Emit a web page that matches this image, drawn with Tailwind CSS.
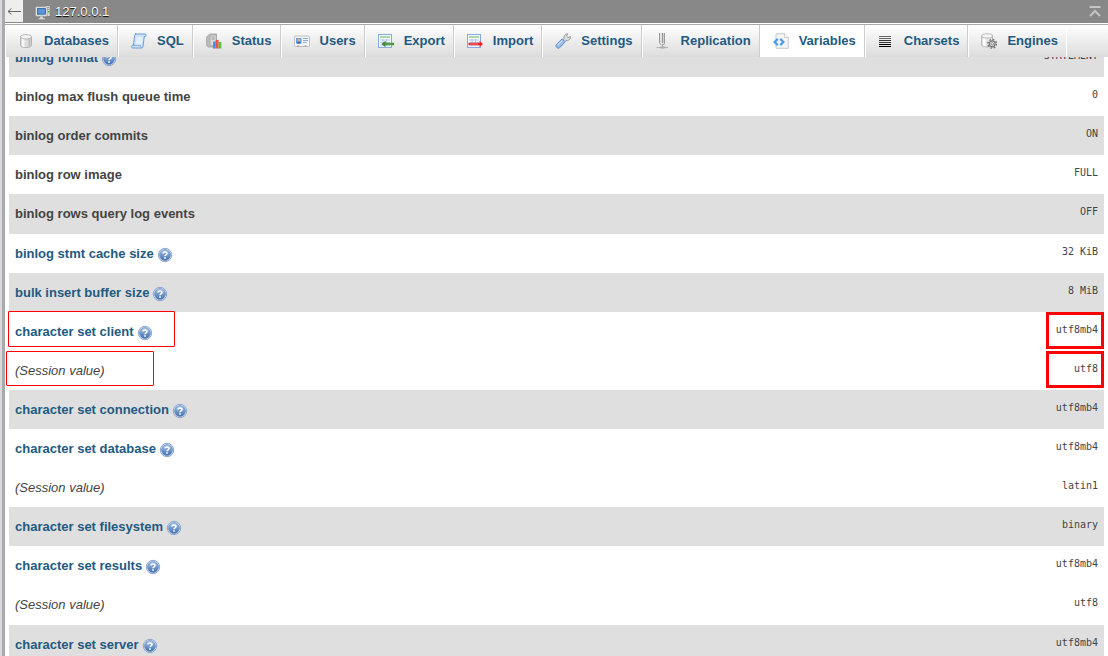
<!DOCTYPE html>
<html lang="en">
<head>
    <meta charset="UTF-8">
    <meta name="viewport" content="width=device-width, initial-scale=1.0">
    <title>127.0.0.1 | Server variables</title>
    <script src="https://cdn.jsdelivr.net/npm/@tailwindcss/browser@4"></script>
</head>
<body class="h-screen overflow-hidden bg-white font-['Liberation_Sans',Arial,sans-serif] text-[13px] leading-4 text-[#444]">
    <!-- Shared help icon -->
    <svg class="absolute h-0 w-0">
        <defs>
            <linearGradient id="helpFill" x1="0" y1="0" x2="0" y2="1">
                <stop offset="0" stop-color="#a9c4e6"/>
                <stop offset="1" stop-color="#3f70b0"/>
            </linearGradient>
        </defs>
        <symbol id="help" viewBox="0 0 16 16">
            <circle cx="8" cy="8" r="6.7" fill="#f0f5fc" stroke="#7f9ccb" stroke-width=".9"/>
            <circle cx="8" cy="8" r="5.5" fill="url(#helpFill)" stroke="#5b82b8" stroke-width=".6"/>
            <path d="M6 6.6C6 4.4 10 4.4 10 6.6C10 7.9 8 7.8 8 9.3" fill="none" stroke="#fff" stroke-width="1.5"/>
            <rect x="7.2" y="10.2" width="1.6" height="1.6" fill="#fff"/>
        </symbol>
    </svg>

    <div class="flex h-full">
        <!-- Navigation resizer -->
        <div class="w-[5px] shrink-0 border-r-3 border-[#aaa] bg-[#dadade]"></div>

        <div class="relative min-w-0 flex-1">
            <!-- Top bar -->
            <header class="absolute inset-x-0 top-0 z-10 bg-white">
                <div class="flex h-[23px] items-center bg-[#888] pr-[5px]">
                    <button type="button" aria-label="Hide panel" class="flex h-[22px] w-[18px] items-center justify-center self-start bg-[#eee]">
                        <svg class="h-4 w-4" viewBox="0 0 16 16" fill="none" stroke="#666" stroke-width="1"><path d="M15 8.5H2M5.5 5.5L2 8.5L5.5 11.5"/></svg>
                    </button>
                    <a href="#server" class="ml-3 flex items-center gap-1 text-white text-shadow-[0_1px_1px_#000]">
                        <svg class="h-4 w-4" viewBox="0 0 16 16">
                            <path d="M10 1.5H15.2V12.5H10Z" fill="#d5d5d5" stroke="#777" stroke-width=".8"/>
                            <path d="M11.5 3.5H14M11.5 5.5H14" stroke="#888" stroke-width=".8"/>
                            <rect x="13" y="7" width="1.5" height="1.5" fill="#4caf30"/>
                            <rect x=".6" y="2.8" width="11.6" height="9.4" rx=".8" fill="#eee" stroke="#999" stroke-width=".8"/>
                            <rect x="2.5" y="4.6" width="8" height="5.6" fill="#5e90d6" stroke="#285a9e" stroke-width=".8"/>
                            <path d="M5 12.2V14H3.5V15.4H10V14H8V12.2Z" fill="#ddd" stroke="#888" stroke-width=".4"/>
                        </svg>
                        127.0.0.1
                    </a>
                    <a href="#top" aria-label="Back to top" class="ml-auto">
                        <svg class="h-4 w-4" viewBox="0 0 16 16" fill="none" stroke="#c4c4c4" stroke-width="2"><path d="M2.5 3H13.5M3 12L8 7L13 12"/></svg>
                    </a>
                </div>

                <!-- Tabs -->
                <nav class="mt-px flex h-[33px] border-t border-[#aaa] bg-linear-to-b from-white to-[#dcdcdc] font-bold text-[#235a81]">
                    <a href="#databases" class="flex items-center gap-[10px] border-r border-l border-l-white border-r-[#ccc] pr-2 pl-3">
                        <svg class="h-4 w-4" viewBox="0 0 16 16">
                            <path d="M2.5 4V12.5C2.5 15.2 13.5 15.2 13.5 12.5V4Z" fill="#ddd" stroke="#aaa" stroke-width=".8"/>
                            <path d="M4 5V13.3L6.5 14V5Z" fill="#f8f8f8"/>
                            <path d="M10.5 5V14L12.5 13.3V5Z" fill="#bbb"/>
                            <ellipse cx="8" cy="3.8" rx="5.5" ry="2.2" fill="#f2f2f2" stroke="#aaa" stroke-width=".8"/>
                        </svg>
                        Databases
                    </a>
                    <a href="#sql" class="flex items-center gap-[10px] border-r border-l border-l-white border-r-[#ccc] pr-2 pl-3">
                        <svg class="h-4 w-4" viewBox="0 0 16 16">
                            <path d="M4 1H14.5C15.6 1 15.5 3.5 14 3.5H13.3L12 13.5C11.8 14.7 11.2 15 10.5 15H1.5C.2 15 .3 12.3 1.6 12.3H2.4L3.6 2.6C3.7 1.6 4 1 5 1Z" fill="#cfe2fa" stroke="#6b9bdb" stroke-width="1"/>
                            <path d="M5.5 4L4.5 12H10.5L11.7 4Z" fill="#e3effd"/>
                            <path d="M2 12.3H9.5C9.3 13.6 9.8 14.5 10.6 14.8" fill="none" stroke="#6b9bdb" stroke-width=".8"/>
                        </svg>
                        SQL
                    </a>
                    <a href="#status" class="flex items-center gap-[10px] border-r border-l border-l-white border-r-[#ccc] pr-2 pl-3">
                        <svg class="h-4 w-4" viewBox="0 0 16 16">
                            <path d="M.6 4L3.6 1H10.5V11L8 14H2.5L.6 12.5Z" fill="#bbb" stroke="#999" stroke-width=".7"/>
                            <path d="M4.2 2H10V12.5H4.2Z" fill="#ddd" stroke="#999" stroke-width=".5"/>
                            <path d="M5.5 4H8.8M5.5 6H8.8" stroke="#888" stroke-width=".8"/>
                            <rect x="7" y="8.5" width="2.8" height="7" fill="#4b8df0"/>
                            <rect x="9.8" y="7" width="2.8" height="8.5" fill="#ef5242"/>
                            <rect x="12.6" y="9" width="2.8" height="6.5" fill="#58bd45"/>
                        </svg>
                        Status
                    </a>
                    <a href="#users" class="flex items-center gap-[10px] border-r border-l border-l-white border-r-[#ccc] pr-2 pl-3">
                        <svg class="h-4 w-4" viewBox="0 0 16 16">
                            <rect x=".5" y="3" width="15" height="10.5" rx="1" fill="#f5f5f5" stroke="#bbb" stroke-width=".9"/>
                            <rect x="2" y="5" width="5.5" height="5.5" fill="#5e9be4"/>
                            <circle cx="4.8" cy="7" r="1.5" fill="#e6b184"/>
                            <path d="M3 10.5C3 8 6.6 8 6.6 10.5Z" fill="#2d62a5"/>
                            <path d="M9 5.5H14M9 7.5H14M9 9.5H12.5" stroke="#7da1d1" stroke-width=".9"/>
                            <path d="M3.5 13H5.5M10.5 13H12.5" stroke="#999" stroke-width="1"/>
                        </svg>
                        Users
                    </a>
                    <a href="#export" class="flex items-center gap-[10px] border-r border-l border-l-white border-r-[#ccc] pr-2 pl-3">
                        <svg class="h-4 w-4" viewBox="0 0 16 16">
                            <rect x=".5" y="1.5" width="13" height="13" fill="#f5f9ff" stroke="#86a9df" stroke-width="1"/>
                            <path d="M2 4H12" stroke="#92cd85" stroke-width="1.5"/>
                            <path d="M2 7H12M2 9.5H12M2 12H12M5 6V13M8.5 6V13" stroke="#a6bde3" stroke-width=".8"/>
                            <path d="M3.5 11L7.5 7.8V9.8H16V12.2H7.5V14.2Z" fill="#3c8633"/>
                            <path d="M7 11H15" stroke="#8cc37c" stroke-width=".7"/>
                        </svg>
                        Export
                    </a>
                    <a href="#import" class="flex items-center gap-[10px] border-r border-l border-l-white border-r-[#ccc] pr-2 pl-3">
                        <svg class="h-4 w-4" viewBox="0 0 16 16">
                            <rect x=".5" y="1.5" width="13" height="13" fill="#f5f9ff" stroke="#86a9df" stroke-width="1"/>
                            <path d="M2 4H12" stroke="#92cd85" stroke-width="1.5"/>
                            <path d="M2 7H12M2 9.5H12M2 12H12M5 6V13M8.5 6V13" stroke="#a6bde3" stroke-width=".8"/>
                            <path d="M16 11L12.5 7.8V9.8H1.5V12.2H12.5V14.2Z" fill="#f02525"/>
                            <path d="M3 11H11" stroke="#ff9a9a" stroke-width=".7"/>
                        </svg>
                        Import
                    </a>
                    <a href="#settings" class="flex items-center gap-[10px] border-r border-l border-l-white border-r-[#ccc] pr-2 pl-3">
                        <svg class="h-4 w-4" viewBox="0 0 16 16">
                            <path d="M8 8L9 5.5C8.3 2.5 10.5 .5 13 1L11.5 3L13 4.7L15.4 3.4C16 6 13.5 8.2 11 7.4L9.5 9Z" fill="#ddd" stroke="#8a8a8a" stroke-width=".8"/>
                            <path d="M7.2 5.8L10.2 8.8L4.7 14.7C2.8 16.4 -.2 13.5 1.3 11.6Z" fill="#9dbff0" stroke="#5880c8" stroke-width=".9"/>
                            <path d="M7 7.8L3 12" stroke="#c3d9f8" stroke-width="1.3"/>
                        </svg>
                        Settings
                    </a>
                    <a href="#replication" class="flex items-center gap-[10px] border-r border-l border-l-white border-r-[#ccc] pr-2 pl-3">
                        <svg class="h-4 w-4" viewBox="0 0 16 16">
                            <path d="M4.5 0V9.5L6 12M7.5 0V10M9.5 0V10L8.5 12" fill="none" stroke="#999" stroke-width="1"/>
                            <path d="M6 0V10M8.5 0V10" stroke="#d0d0d0" stroke-width="1"/>
                            <path d="M7.5 11V14" stroke="#aaa" stroke-width="1"/>
                            <path d="M1.5 14.5H13" stroke="#b5b5b5" stroke-width="1.2"/>
                            <rect x="5.5" y="13.5" width="4" height="2" fill="#aaa"/>
                        </svg>
                        Replication
                    </a>
                    <a href="#variables" aria-current="page" class="flex items-center gap-[10px] border-r border-l border-l-white border-r-[#ccc] bg-white pr-2 pl-3">
                        <svg class="h-4 w-4" viewBox="0 0 16 16">
                            <path d="M3 .8H11.5L15.3 4.5V15.3H3Z" fill="#f5f5f5" stroke="#c3c3c3" stroke-width=".9"/>
                            <path d="M11.5 .8V4.5H15.3" fill="#fff" stroke="#c3c3c3" stroke-width=".8"/>
                            <path d="M4.8 5.9L1.6 9L4.8 12.1M7.2 5.9L10.4 9L7.2 12.1" fill="none" stroke="#4e9bec" stroke-width="2.2"/>
                        </svg>
                        Variables
                    </a>
                    <a href="#charsets" class="flex items-center gap-[10px] border-r border-l border-l-white border-r-[#ccc] pr-2 pl-3">
                        <svg class="h-4 w-4" viewBox="0 0 16 16" shape-rendering="crispEdges">
                            <path d="M1 3.5H13M1 5.5H13" stroke="#666" stroke-width="1"/>
                            <path d="M1 7.5H13M1 9.5H13" stroke="#333" stroke-width="1"/>
                            <path d="M1 11.5H13M1 13.5H13" stroke="#000" stroke-width="1"/>
                        </svg>
                        Charsets
                    </a>
                    <a href="#engines" class="flex items-center gap-[10px] border-r border-l border-l-white border-r-white pr-2 pl-3">
                        <svg class="h-4 w-4" viewBox="0 0 16 16">
                            <path d="M.7 3V12C.7 14.5 11.5 14.5 11.5 12V3Z" fill="#e5e5e5" stroke="#aaa" stroke-width=".8"/>
                            <path d="M2 4V12.7L4.5 13.4V4Z" fill="#fff"/>
                            <ellipse cx="6.1" cy="2.9" rx="5.4" ry="2.1" fill="#f5f5f5" stroke="#aaa" stroke-width=".8"/>
                            <circle cx="11.2" cy="10.8" r="4.3" fill="none" stroke="#777" stroke-width="1.5" stroke-dasharray="1.7 1.67"/>
                            <circle cx="11.2" cy="10.8" r="3" fill="#ddd" stroke="#777" stroke-width="1.2"/>
                            <circle cx="11.2" cy="10.8" r="1.2" fill="#fff" stroke="#777" stroke-width=".8"/>
                        </svg>
                        Engines
                    </a>
                </nav>
            </header>

            <!-- Variables list, scrolled under the top bar -->
            <main class="h-full overflow-hidden pt-[38px] pr-1 pl-1">
                <table class="w-full">
                    <tbody>
                        <tr class="h-[39px] bg-[#dfdfdf]">
                            <th scope="row" class="px-[6px] text-left"><a href="#binlog_format" class="flex items-center gap-[3px] text-[#235a81]">binlog format <svg class="mt-[3px] h-4 w-4"><use href="#help"/></svg></a></th>
                            <td class="px-[6px] pb-1 text-right font-['DejaVu_Sans_Mono',monospace] text-[10px]">STATEMENT</td>
                        </tr>
                        <tr class="h-[39px]">
                            <th scope="row" class="px-[6px] text-left">binlog max flush queue time</th>
                            <td class="px-[6px] pb-1 text-right font-['DejaVu_Sans_Mono',monospace] text-[10px]">0</td>
                        </tr>
                        <tr class="h-[39px] bg-[#dfdfdf]">
                            <th scope="row" class="px-[6px] text-left">binlog order commits</th>
                            <td class="px-[6px] pb-1 text-right font-['DejaVu_Sans_Mono',monospace] text-[10px]">ON</td>
                        </tr>
                        <tr class="h-[39px]">
                            <th scope="row" class="px-[6px] text-left">binlog row image</th>
                            <td class="px-[6px] pb-1 text-right font-['DejaVu_Sans_Mono',monospace] text-[10px]">FULL</td>
                        </tr>
                        <tr class="h-10 bg-[#dfdfdf]">
                            <th scope="row" class="px-[6px] text-left">binlog rows query log events</th>
                            <td class="px-[6px] pb-1 text-right font-['DejaVu_Sans_Mono',monospace] text-[10px]">OFF</td>
                        </tr>
                        <tr class="h-[39px]">
                            <th scope="row" class="px-[6px] text-left"><a href="#binlog_stmt_cache_size" class="flex items-center gap-[3px] text-[#235a81]">binlog stmt cache size <svg class="mt-[3px] h-4 w-4"><use href="#help"/></svg></a></th>
                            <td class="px-[6px] pb-1 text-right font-['DejaVu_Sans_Mono',monospace] text-[10px]">32 KiB</td>
                        </tr>
                        <tr class="h-[39px] bg-[#dfdfdf]">
                            <th scope="row" class="px-[6px] text-left"><a href="#bulk_insert_buffer_size" class="flex items-center gap-[3px] text-[#235a81]">bulk insert buffer size <svg class="mt-[3px] h-4 w-4"><use href="#help"/></svg></a></th>
                            <td class="px-[6px] pb-1 text-right font-['DejaVu_Sans_Mono',monospace] text-[10px]">8 MiB</td>
                        </tr>
                        <tr class="h-[39px]">
                            <th scope="row" class="relative px-[6px] text-left">
                                <a href="#character_set_client" class="flex items-center gap-[3px] text-[#235a81]">character set client <svg class="mt-[3px] h-4 w-4"><use href="#help"/></svg></a>
                                <span class="absolute -top-px -left-px h-9 w-[167px] rounded-[1px] border border-[#f00]"></span>
                            </th>
                            <td class="relative px-[6px] pb-1 text-right font-['DejaVu_Sans_Mono',monospace] text-[10px]">utf8mb4<span class="absolute top-0 right-0 h-[37px] w-[58px] border-3 border-[#f00]"></span></td>
                        </tr>
                        <tr class="h-[39px]">
                            <th scope="row" class="relative px-[6px] text-left font-normal italic">
                                (Session value)
                                <span class="absolute top-0 -left-[3px] h-[35px] w-[148px] rounded-[1px] border border-[#f00]"></span>
                            </th>
                            <td class="relative px-[6px] pb-1 text-right font-['DejaVu_Sans_Mono',monospace] text-[10px]">utf8<span class="absolute top-0 right-0 h-[37px] w-[58px] border-3 border-[#f00]"></span></td>
                        </tr>
                        <tr class="h-[39px] bg-[#dfdfdf]">
                            <th scope="row" class="px-[6px] text-left"><a href="#character_set_connection" class="flex items-center gap-[3px] text-[#235a81]">character set connection <svg class="mt-[3px] h-4 w-4"><use href="#help"/></svg></a></th>
                            <td class="px-[6px] pb-1 text-right font-['DejaVu_Sans_Mono',monospace] text-[10px]">utf8mb4</td>
                        </tr>
                        <tr class="h-[39px]">
                            <th scope="row" class="px-[6px] text-left"><a href="#character_set_database" class="flex items-center gap-[3px] text-[#235a81]">character set database <svg class="mt-[3px] h-4 w-4"><use href="#help"/></svg></a></th>
                            <td class="px-[6px] pb-1 text-right font-['DejaVu_Sans_Mono',monospace] text-[10px]">utf8mb4</td>
                        </tr>
                        <tr class="h-[39px]">
                            <th scope="row" class="px-[6px] text-left font-normal italic">(Session value)</th>
                            <td class="px-[6px] pb-1 text-right font-['DejaVu_Sans_Mono',monospace] text-[10px]">latin1</td>
                        </tr>
                        <tr class="h-[39px] bg-[#dfdfdf]">
                            <th scope="row" class="px-[6px] text-left"><a href="#character_set_filesystem" class="flex items-center gap-[3px] text-[#235a81]">character set filesystem <svg class="mt-[3px] h-4 w-4"><use href="#help"/></svg></a></th>
                            <td class="px-[6px] pb-1 text-right font-['DejaVu_Sans_Mono',monospace] text-[10px]">binary</td>
                        </tr>
                        <tr class="h-[39px]">
                            <th scope="row" class="px-[6px] text-left"><a href="#character_set_results" class="flex items-center gap-[3px] text-[#235a81]">character set results <svg class="mt-[3px] h-4 w-4"><use href="#help"/></svg></a></th>
                            <td class="px-[6px] pb-1 text-right font-['DejaVu_Sans_Mono',monospace] text-[10px]">utf8mb4</td>
                        </tr>
                        <tr class="h-10">
                            <th scope="row" class="px-[6px] text-left font-normal italic">(Session value)</th>
                            <td class="px-[6px] pb-1 text-right font-['DejaVu_Sans_Mono',monospace] text-[10px]">utf8</td>
                        </tr>
                        <tr class="h-[39px] bg-[#dfdfdf]">
                            <th scope="row" class="px-[6px] text-left"><a href="#character_set_server" class="flex items-center gap-[3px] text-[#235a81]">character set server <svg class="mt-[3px] h-4 w-4"><use href="#help"/></svg></a></th>
                            <td class="px-[6px] pb-1 text-right font-['DejaVu_Sans_Mono',monospace] text-[10px]">utf8mb4</td>
                        </tr>
                    </tbody>
                </table>
            </main>
        </div>
    </div>
</body>
</html>
